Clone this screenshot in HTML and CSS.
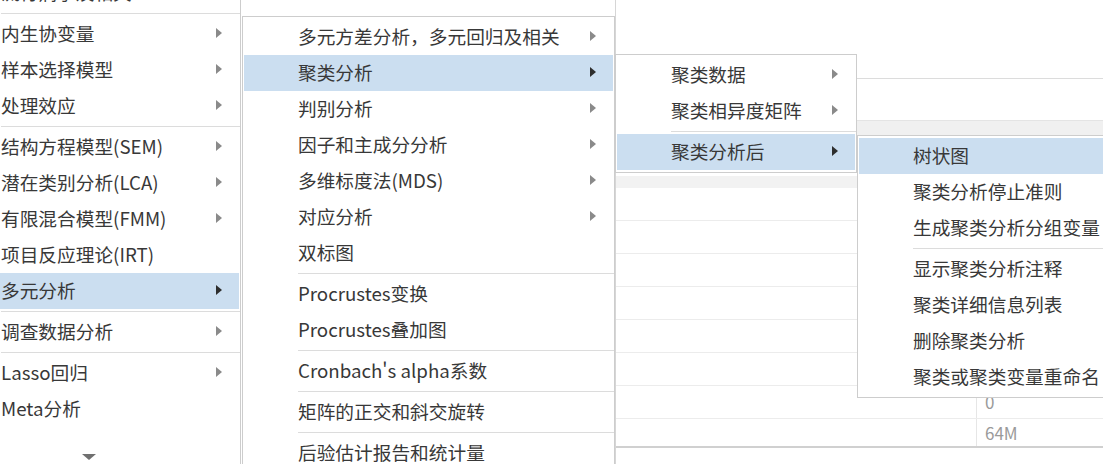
FILE: index.html
```html
<!DOCTYPE html>
<html lang="zh-CN">
<head>
    <meta charset="UTF-8">
    <title>多元分析菜单</title>
    <link rel="stylesheet" href="styles.css">
</head>
<body>

    <div class="workspace">
        <div class="side"></div>
        <div class="panel">
            <div class="panel-top"></div>
            <div class="panel-gap"></div>
            <div class="panel-head"></div>
            <div class="panel-gap2"></div>
            <div class="panel-band"></div>
            <div class="row"><div class="cell"></div><div class="cell"></div></div>
            <div class="row"><div class="cell"></div><div class="cell"></div></div>
            <div class="row"><div class="cell"></div><div class="cell"></div></div>
            <div class="row"><div class="cell"></div><div class="cell"></div></div>
            <div class="row"><div class="cell"></div><div class="cell"></div></div>
            <div class="row"><div class="cell"></div><div class="cell"></div></div>
            <div class="row"><div class="cell"></div><div class="cell val">0</div></div>
            <div class="row last"><div class="cell"></div><div class="cell val">64M</div></div>
        </div>
    </div>

    <!-- level 1 : statistics menu (scrolled) -->
    <div class="menu menu-stats">
        <div class="item">流行病学及相关<span class="arrow"></span></div>
        <div class="sep"></div>
        <div class="item">内生协变量<span class="arrow"></span></div>
        <div class="item">样本选择模型<span class="arrow"></span></div>
        <div class="item">处理效应<span class="arrow"></span></div>
        <div class="sep"></div>
        <div class="item">结构方程模型(SEM)<span class="arrow"></span></div>
        <div class="item">潜在类别分析(LCA)<span class="arrow"></span></div>
        <div class="item">有限混合模型(FMM)<span class="arrow"></span></div>
        <div class="item">项目反应理论(IRT)</div>
        <div class="item active">多元分析<span class="arrow"></span></div>
        <div class="sep"></div>
        <div class="item">调查数据分析<span class="arrow"></span></div>
        <div class="sep"></div>
        <div class="item">Lasso回归<span class="arrow"></span></div>
        <div class="item">Meta分析</div>
        <div class="scroll-down"><span class="down"></span></div>
    </div>

    <!-- level 2 : multivariate -->
    <div class="menu menu-multi">
        <div class="item">多元方差分析，多元回归及相关<span class="arrow"></span></div>
        <div class="item active">聚类分析<span class="arrow"></span></div>
        <div class="item">判别分析<span class="arrow"></span></div>
        <div class="item">因子和主成分分析<span class="arrow"></span></div>
        <div class="item">多维标度法(MDS)<span class="arrow"></span></div>
        <div class="item">对应分析<span class="arrow"></span></div>
        <div class="item">双标图</div>
        <div class="sep"></div>
        <div class="item">Procrustes变换</div>
        <div class="item">Procrustes叠加图</div>
        <div class="sep"></div>
        <div class="item">Cronbach's alpha系数</div>
        <div class="sep"></div>
        <div class="item">矩阵的正交和斜交旋转</div>
        <div class="sep"></div>
        <div class="item">后验估计报告和统计量</div>
    </div>

    <!-- level 3 : cluster -->
    <div class="menu menu-cluster">
        <div class="item">聚类数据<span class="arrow"></span></div>
        <div class="item">聚类相异度矩阵<span class="arrow"></span></div>
        <div class="sep"></div>
        <div class="item active">聚类分析后<span class="arrow"></span></div>
    </div>

    <!-- level 4 : postestimation -->
    <div class="menu menu-post">
        <div class="item active">树状图</div>
        <div class="item">聚类分析停止准则</div>
        <div class="item">生成聚类分析分组变量</div>
        <div class="sep"></div>
        <div class="item">显示聚类分析注释</div>
        <div class="item">聚类详细信息列表</div>
        <div class="item">删除聚类分析</div>
        <div class="item">聚类或聚类变量重命名</div>
    </div>

</body>
</html>
```

FILE: styles.css
```css
body {
    margin: 0;
    width: 1103px;
    height: 464px;
    overflow: hidden;
    position: relative;
    background: #fff;
    font-family: "Noto Sans CJK SC", "Noto Sans", sans-serif;
    color: #383838;
}

/* background window behind the menus */
.workspace {
    display: flex;
    height: 464px;
}
.side {
    width: 615px;
}
.panel {
    flex: 1;
    border-left: 1px solid #d6d6d6;
}
.panel-top {
    height: 78px;
    border-bottom: 1px solid #dcdcdc;
}
.panel-gap {
    height: 41px;
}
.panel-head {
    height: 15px;
    background: #f0f0f0;
    border-top: 1px solid #e4e4e4;
}
.panel-gap2 {
    height: 40px;
}
.panel-band {
    height: 12px;
    background: #f2f2f2;
}
.row {
    display: flex;
    height: 32px;
    border-bottom: 1px solid #ececec;
}
.row.last {
    height: 27px;
    border-bottom: 2px solid #d0d0d0;
}
.cell:first-child {
    width: 360px;
    border-right: 1px solid #e6e6e6;
}
.val {
    padding-left: 8px;
    font-size: 17px;
    line-height: 32px;
    color: #9a9a9a;
}
.row.last .val {
    line-height: 28px;
}

/* menus */
.menu {
    position: absolute;
    background: #fff;
    border: 1px solid #cdcdcd;
    padding: 2px 0;
    font-size: 18.7px;
}
.menu-stats {
    left: -55px;
    top: -28px;
    width: 294px;
}
.menu-multi {
    left: 242px;
    top: 16px;
    width: 371px;
}
.menu-cluster {
    left: 615px;
    top: 54px;
    width: 240px;
}
.menu-post {
    left: 857px;
    top: 135px;
    width: 300px;
}
.item {
    box-sizing: border-box;
    display: flex;
    align-items: center;
    height: 36px;
    padding-left: 54px;
    padding-bottom: 3px;
    margin: 0 1px;
    white-space: nowrap;
}
.item.active {
    background: #cbdef0;
}
.arrow {
    margin-left: auto;
    margin-right: 17px;
    width: 0;
    height: 0;
    border-left: 6px solid #8a8a8a;
    border-top: 5px solid transparent;
    border-bottom: 5px solid transparent;
}
.item.active .arrow {
    border-left-color: #2e2e2e;
}
.sep {
    height: 1px;
    background: #dcdcdc;
    margin: 2px 0 2px 55px;
}
.scroll-down {
    display: flex;
    justify-content: center;
    align-items: center;
    height: 36px;
    margin-top: 12px;
    padding-right: 8px;
}
.down {
    width: 0;
    height: 0;
    border-top: 6px solid #707070;
    border-left: 7px solid transparent;
    border-right: 7px solid transparent;
}
```
